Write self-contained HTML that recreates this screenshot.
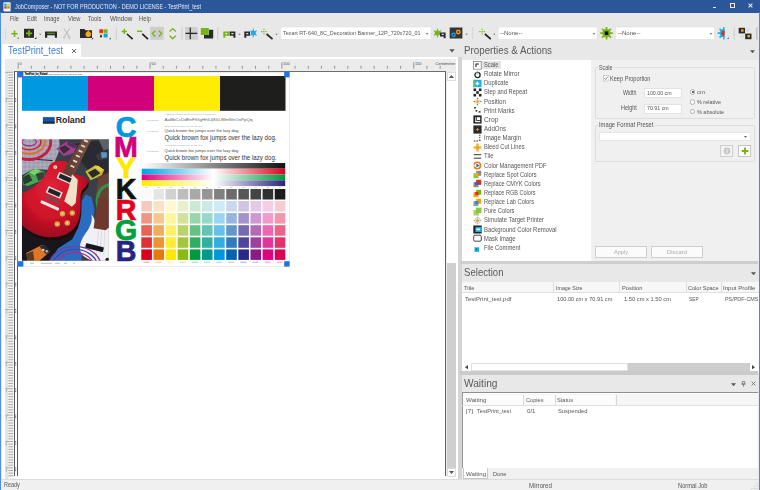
<!DOCTYPE html>
<html><head><meta charset="utf-8"><title>JobComposer</title>
<style>
html,body{margin:0;padding:0;}
body{width:760px;height:490px;overflow:hidden;position:relative;background:#e8e8e8;font-family:"Liberation Sans",sans-serif;}
div,span,svg{position:absolute;display:block;}
span{white-space:nowrap;transform-origin:0 50%;}
svg text{font-family:"Liberation Sans",sans-serif;}
</style></head><body>
<div style="left:0px;top:0px;width:760px;height:12.5px;background:#2b579a;"></div>
<svg style="left:2.5px;top:1.5px" width="8" height="10" viewBox="0 0 8 10"><rect x="0.4" y="0.3" width="7.2" height="9.2" rx="0.8" fill="#f2f2f2"/><rect x="1.2" y="1.6" width="2.5" height="2.3" fill="#2aa6e0"/><rect x="4.2" y="1.6" width="2.5" height="2.3" fill="#f0c020"/><rect x="1.2" y="4.3" width="2.5" height="2.3" fill="#e04040"/><rect x="4.2" y="4.3" width="2.5" height="2.3" fill="#7ab51d"/></svg>
<span style="left:14.6px;top:3.30px;font-size:6.5px;line-height:7.80px;color:#e4eaf6;transform:scaleX(0.8424);">JobComposer - NOT FOR PRODUCTION - DEMO LICENSE - TestPrint_test</span>
<div style="left:712.8px;top:6.8px;width:3.2px;height:1.2px;background:#e8ecf4;"></div>
<div style="left:730px;top:3.4px;width:4.6px;height:4.6px;background:transparent;border:1px solid #e8ecf4;box-sizing:border-box;border-top-width:1.6px;"></div>
<svg style="left:748px;top:3.2px" width="5" height="5" viewBox="0 0 5 5"><path d="M0.6 0.6L4.4 4.4M4.4 0.6L0.6 4.4" stroke="#e8ecf4" stroke-width="1.1"/></svg>
<div style="left:0px;top:12px;width:1.2px;height:478px;background:#4f8fe6;"></div>
<div style="left:758.6px;top:12px;width:1.4px;height:478px;background:#5585d0;"></div>
<span style="left:9.8px;top:15.16px;font-size:6.4px;line-height:7.68px;color:#505050;transform:scaleX(0.8631);">File</span>
<span style="left:26.6px;top:15.16px;font-size:6.4px;line-height:7.68px;color:#505050;transform:scaleX(0.8977);">Edit</span>
<span style="left:44.2px;top:15.16px;font-size:6.4px;line-height:7.68px;color:#505050;transform:scaleX(0.8771);">Image</span>
<span style="left:68px;top:15.16px;font-size:6.4px;line-height:7.68px;color:#505050;transform:scaleX(0.9014);">View</span>
<span style="left:88px;top:15.16px;font-size:6.4px;line-height:7.68px;color:#505050;transform:scaleX(0.8902);">Tools</span>
<span style="left:109.5px;top:15.16px;font-size:6.4px;line-height:7.68px;color:#505050;transform:scaleX(0.9797);">Window</span>
<span style="left:139.3px;top:15.16px;font-size:6.4px;line-height:7.68px;color:#505050;transform:scaleX(0.9117);">Help</span>
<svg style="left:0;top:24px" width="760" height="20" viewBox="0 24 760 20"><path d="M5.5 28V39" stroke="#bbb" stroke-width="0.8" stroke-dasharray="1 1"/><path d="M14.5 30.5V37M11.3 33.8H17.7" stroke="#7ab317" stroke-width="1.6"/><path d="M17 38.8L18.8 37V38.8Z" fill="#666"/><rect x="24" y="28.8" width="10" height="9" fill="#2a2a2a"/><path d="M29 30.3V36.3M26 33.3H32" stroke="#7ab317" stroke-width="1.8"/><path d="M34.5 39L36.5 37V39Z" fill="#333"/><path d="M39 33.8L41.4 33.8L40.2 35Z" fill="#666"/><path d="M45 31.5H57V37.8H54.8V35.2H47.2V37.8H45Z" fill="#2a2a2a"/><rect x="47.2" y="32.8" width="7.6" height="0.9" fill="#7ab317"/><path d="M64 28.5L69 36.5M69.5 28.5L64.5 36.5" stroke="#a9b7a0" stroke-width="0.9" fill="none"/><circle cx="64.3" cy="37.3" r="1" fill="none" stroke="#b5b5b5" stroke-width="0.6"/><circle cx="69.2" cy="37.3" r="1" fill="none" stroke="#b5b5b5" stroke-width="0.6"/><path d="M68.5 39.3L70 37.8V39.3Z" fill="#bbb"/><path d="M80 29H84.5L85.5 30.3H92V38H80Z" fill="#2a2a2a"/><circle cx="88.3" cy="34.3" r="2.8" fill="#f5a515"/><path d="M88.3 29.8L89.6 32.5H87Z" fill="#f5a515"/><path d="M91.3 39.3L93.2 37.4V39.3Z" fill="#333"/><rect x="99.3" y="29.3" width="3.8" height="3.6" fill="#e8281e"/><rect x="103.6" y="29.3" width="4" height="3.6" fill="#7ab317"/><rect x="103.6" y="33.5" width="4" height="4" fill="#1aa0e0"/><rect x="100" y="35.3" width="2" height="2" fill="#222"/><rect x="99.3" y="33.5" width="3.8" height="1.2" fill="#f5c518"/><path d="M109 39.3L110.8 37.5V39.3Z" fill="#333"/><path d="M116.3 27.5V39.5" stroke="#c4c4c4" stroke-width="0.8"/><path d="M124.3 28.8V34M121.7 31.4H126.9" stroke="#7ab317" stroke-width="1.5"/><path d="M127 34L132.6 39.2" stroke="#222" stroke-width="1.7"/><path d="M137 31.3H142.2" stroke="#7ab317" stroke-width="1.5"/><path d="M142.3 33.8L148 39.2" stroke="#222" stroke-width="1.7"/><rect x="150.3" y="26.8" width="13.4" height="13" fill="#cdcdcd"/><path d="M155.3 30.8L152.3 33.6L155.3 36.4M158.7 30.8L161.7 33.6L158.7 36.4" stroke="#7ab317" stroke-width="1.4" fill="none"/><path d="M169.6 31.6L172.7 28.6L175.8 31.6M169.6 35.8L172.7 38.8L175.8 35.8" stroke="#7ab317" stroke-width="1.4" fill="none"/><path d="M182 27.5V39.5" stroke="#c4c4c4" stroke-width="0.8"/><rect x="185" y="27" width="12.8" height="12.8" fill="#cfcfcf"/><path d="M190.3 27.5V39.3M185.5 33.3H197.3" stroke="#222" stroke-width="1.2"/><path d="M204 31V38.6H213.2V29.8H209V35H204Z" fill="#2a2a2a"/><rect x="200.8" y="28" width="8" height="7" fill="#7ab317"/><path d="M217.8 27.5V39.5" stroke="#c4c4c4" stroke-width="0.8"/><path fill-rule="evenodd" d="M223.3 31.5H229.10000000000002V35.8H225.3V37.7H223.3ZM225.3 33H227.3V34.3H225.3Z" fill="#7ab317"/><path fill-rule="evenodd" d="M229.6 31.5H235.4V37.7H233.4V35.8H229.6ZM231.4 33H233.4V34.3H231.4Z" fill="#2a2a2a"/><path d="M238.3 33.8L240.7 33.8L239.5 35Z" fill="#666"/><path fill-rule="evenodd" d="M244.3 31.5H250.10000000000002V35.8H246.3V37.7H244.3ZM246.3 33H248.3V34.3H246.3Z" fill="#2a2a2a"/><path d="M253.2 28L254.3 31.2L257 30L255.6 33L257 35.9L254.3 34.8L253.2 38L252.1 34.8L250 35.6L251.2 33L250 30.2L252.1 31.2Z" fill="#1cb0e8"/><path d="M264 28.8V34.4M261 31.6H267" stroke="#7ab317" stroke-width="1.1" stroke-dasharray="1.3 0.9"/><path d="M266.6 34L272.5 39.2" stroke="#222" stroke-width="1.7"/><path d="M275.4 33.8L277.8 33.8L276.6 35Z" fill="#666"/><rect x="280.5" y="27" width="150.5" height="12.4" fill="#fff" stroke="#dcdcdc" stroke-width="0.5"/><path d="M425.8 33.3H428.4L427.1 34.8Z" fill="#555"/><path d="M437.5 28L438.6 31.2L441.6 30L440 33L441.6 36L438.6 34.8L437.5 38L436.4 34.8L433.6 36L435 33L433.6 30L436.4 31.2Z" fill="#7ab317"/><path fill-rule="evenodd" d="M440 32.4H445.6V38.2H443.7V36.4H440ZM441.7 33.8H443.7V35H441.7Z" fill="#2a2a2a"/><rect x="449.7" y="27.5" width="12.7" height="11" fill="#33353a"/><circle cx="453.6" cy="34.8" r="1.6" fill="none" stroke="#18a8e8" stroke-width="1.3"/><circle cx="458.3" cy="32" r="1.7" fill="none" stroke="#f5a010" stroke-width="1.4"/><path d="M465.4 33.8L467.8 33.8L466.6 35Z" fill="#666"/><path d="M472.6 27.5V39.5" stroke="#bdbdbd" stroke-width="0.8" stroke-dasharray="1 1"/><path d="M482.3 28.8V34.4M479.3 31.6H485.3" stroke="#7ab317" stroke-width="1.1" stroke-dasharray="1.3 0.9"/><path d="M484.90000000000003 34L490.8 39.2" stroke="#222" stroke-width="1.7"/><path d="M493.2 33.8L495.6 33.8L494.4 35Z" fill="#666"/><rect x="498.2" y="27" width="99" height="12.4" fill="#fff" stroke="#dcdcdc" stroke-width="0.5"/><path d="M592.7 33.3H595.3L594 34.8Z" fill="#555"/><path d="M609.50 33.20L612.80 33.20M608.62 35.32L610.95 37.65M606.50 36.20L606.50 39.50M604.38 35.32L602.05 37.65M603.50 33.20L600.20 33.20M604.38 31.08L602.05 28.75M606.50 30.20L606.50 26.90M608.62 31.08L610.95 28.75" stroke="#7ab317" stroke-width="1.7"/><circle cx="606.5" cy="33.2" r="4.1" fill="#7ab317"/><rect x="604.7" y="31.4" width="3.6" height="3.6" fill="#111"/><rect x="615.5" y="27" width="99" height="12.4" fill="#fff" stroke="#dcdcdc" stroke-width="0.5"/><path d="M709.7 33.3H712.3L711 34.8Z" fill="#555"/><clipPath id="hg"><rect x="716" y="26" width="8.6" height="14"/></clipPath><g clip-path="url(#hg)"><path d="M727.00 33.20L730.30 33.20M726.12 35.32L728.45 37.65M724.00 36.20L724.00 39.50M721.88 35.32L719.55 37.65M721.00 33.20L717.70 33.20M721.88 31.08L719.55 28.75M724.00 30.20L724.00 26.90M726.12 31.08L728.45 28.75" stroke="#1cb0e8" stroke-width="1.7"/><circle cx="724" cy="33.2" r="4.1" fill="#1cb0e8"/><circle cx="724" cy="33.2" r="2.6" fill="#e8281e"/></g><path d="M727 39L728.8 37.2V39Z" fill="#555"/><path d="M734.3 27.5V39.5" stroke="#c4c4c4" stroke-width="0.8"/><rect x="738.7" y="27.8" width="6.3" height="5.6" fill="#2a2a2a"/><rect x="745.2" y="33.6" width="6.3" height="5.6" fill="#2a2a2a"/><rect x="741" y="29.3" width="2.6" height="2.4" fill="#f5a010"/><rect x="747.4" y="35" width="2.6" height="2.4" fill="#f5a010"/><rect x="745.4" y="28.4" width="3.5" height="3.5" fill="#dcdcdc"/><rect x="740.5" y="34.6" width="3.5" height="3.5" fill="#dcdcdc"/><path d="M756.8 28V39M756.8 28H758M756.8 39H758" stroke="#aaa" stroke-width="0.8" fill="none"/></svg>
<span style="left:283px;top:29.60px;font-size:6px;line-height:7.20px;color:#555;transform:scaleX(0.9027);">Texart RT-640_8C_Decoration Banner_12P_720x720_01</span>
<span style="left:500.2px;top:29.48px;font-size:6.2px;line-height:7.44px;color:#555;transform:scaleX(0.9749);">--None--</span>
<span style="left:617.5px;top:29.48px;font-size:6.2px;line-height:7.44px;color:#555;transform:scaleX(0.9749);">--None--</span>
<div style="left:2px;top:44px;width:78.5px;height:14px;background:#fff;"></div>
<span style="left:8px;top:43.70px;font-size:11px;line-height:13.20px;color:#3a82d8;transform:scaleX(0.8254);">TestPrint_test</span>
<svg style="left:70.5px;top:48px" width="6" height="6" viewBox="0 0 6 6"><path d="M1 1L5 5M5 1L1 5" stroke="#555" stroke-width="0.9"/></svg>
<svg style="left:449px;top:48.5px" width="6" height="4" viewBox="0 0 6 4"><path d="M0.3 0.3H5.7L3 3.6Z" fill="#555"/></svg>
<div style="left:1.5px;top:57px;width:456.5px;height:422.5px;background:#fff;"></div>
<div style="left:4.5px;top:59px;width:451.5px;height:418px;background:#ececec;"></div>
<div style="left:4.5px;top:72px;width:3.6px;height:407px;background:#e4e4e4;"></div>
<div style="left:8.1px;top:72px;width:6px;height:407px;background:#f5f5f5;"></div>
<div style="left:13.8px;top:71px;width:432.4px;height:408px;background:#fff;border:1px solid #5a5a5a;border-top-color:#6e6e6e;box-sizing:border-box;border-right:1.8px solid #606060;border-bottom:0;"></div>
<div style="left:14px;top:476px;width:432.5px;height:3.5px;background:#fff;"></div>
<div style="left:446.5px;top:72px;width:9px;height:404.5px;background:#cfcfcf;"></div>
<div style="left:446.5px;top:81px;width:9px;height:181.6px;background:#fff;"></div>
<div style="left:458.3px;top:57px;width:3.7px;height:422.5px;background:#d4d4d4;"></div>
<div style="left:446.5px;top:72px;width:9px;height:9px;background:#fff;border:0.5px solid #ddd;box-sizing:border-box;"></div>
<svg style="left:448.5px;top:75px" width="5" height="3" viewBox="0 0 5 3"><path d="M2.5 0L5 3H0Z" fill="#555"/></svg>
<div style="left:446.5px;top:467.5px;width:9px;height:9px;background:#fff;border:0.5px solid #ddd;box-sizing:border-box;"></div>
<svg style="left:448.5px;top:470.5px" width="5" height="3" viewBox="0 0 5 3"><path d="M2.5 3L5 0H0Z" fill="#555"/></svg>
<svg style="left:0;top:58px" width="460" height="14" viewBox="0 58 460 14"><path d="M18.20 62.4V68.7M31.38 65.8V68.7M44.57 65.8V68.7M57.75 65.8V68.7M70.94 65.8V68.7M84.12 65.8V68.7M97.31 65.8V68.7M110.50 65.8V68.7M123.68 65.8V68.7M136.87 65.8V68.7M150.05 62.4V68.7M163.23 65.8V68.7M176.42 65.8V68.7M189.60 65.8V68.7M202.79 65.8V68.7M215.97 65.8V68.7M229.16 65.8V68.7M242.34 65.8V68.7M255.53 65.8V68.7M268.72 65.8V68.7M281.90 62.4V68.7M295.08 65.8V68.7M308.27 65.8V68.7M321.45 65.8V68.7M334.64 65.8V68.7M347.82 65.8V68.7M361.01 65.8V68.7M374.19 65.8V68.7M387.38 65.8V68.7M400.56 65.8V68.7M413.75 62.4V68.7M426.94 65.8V68.7M440.12 65.8V68.7" stroke="#777" stroke-width="0.75"/><text x="19.40" y="65.3" font-size="3.9" fill="#444">0</text><text x="151.25" y="65.3" font-size="3.9" fill="#444">50</text><text x="283.10" y="65.3" font-size="3.9" fill="#444">100</text><text x="414.95" y="65.3" font-size="3.9" fill="#444">150</text><text x="435.3" y="65" font-size="3.9" fill="#444" textLength="20" lengthAdjust="spacingAndGlyphs">Centimeter</text></svg>
<svg style="left:0;top:71px" width="18" height="408" viewBox="0 71 18 408"><path d="M5.6 72.30H13M8.3 74.94H13M8.3 77.57H13M8.3 80.21H13M8.3 82.85H13M8.3 85.48H13M8.3 88.12H13M8.3 90.76H13M8.3 93.40H13M8.3 96.03H13M5.6 98.67H13M8.3 101.31H13M8.3 103.94H13M8.3 106.58H13M8.3 109.22H13M8.3 111.85H13M8.3 114.49H13M8.3 117.13H13M8.3 119.77H13M8.3 122.40H13M5.6 125.04H13M8.3 127.68H13M8.3 130.31H13M8.3 132.95H13M8.3 135.59H13M8.3 138.22H13M8.3 140.86H13M8.3 143.50H13M8.3 146.14H13M8.3 148.77H13M5.6 151.41H13M8.3 154.05H13M8.3 156.68H13M8.3 159.32H13M8.3 161.96H13M8.3 164.59H13M8.3 167.23H13M8.3 169.87H13M8.3 172.51H13M8.3 175.14H13M5.6 177.78H13M8.3 180.42H13M8.3 183.05H13M8.3 185.69H13M8.3 188.33H13M8.3 190.97H13M8.3 193.60H13M8.3 196.24H13M8.3 198.88H13M8.3 201.51H13M5.6 204.15H13M8.3 206.79H13M8.3 209.42H13M8.3 212.06H13M8.3 214.70H13M8.3 217.33H13M8.3 219.97H13M8.3 222.61H13M8.3 225.25H13M8.3 227.88H13M5.6 230.52H13M8.3 233.16H13M8.3 235.79H13M8.3 238.43H13M8.3 241.07H13M8.3 243.70H13M8.3 246.34H13M8.3 248.98H13M8.3 251.62H13M8.3 254.25H13M5.6 256.89H13M8.3 259.53H13M8.3 262.16H13M8.3 264.80H13M8.3 267.44H13M8.3 270.07H13M8.3 272.71H13M8.3 275.35H13M8.3 277.99H13M8.3 280.62H13M5.6 283.26H13M8.3 285.90H13M8.3 288.53H13M8.3 291.17H13M8.3 293.81H13M8.3 296.44H13M8.3 299.08H13M8.3 301.72H13M8.3 304.36H13M8.3 306.99H13M5.6 309.63H13M8.3 312.27H13M8.3 314.90H13M8.3 317.54H13M8.3 320.18H13M8.3 322.81H13M8.3 325.45H13M8.3 328.09H13M8.3 330.73H13M8.3 333.36H13M5.6 336.00H13M8.3 338.64H13M8.3 341.27H13M8.3 343.91H13M8.3 346.55H13M8.3 349.19H13M8.3 351.82H13M8.3 354.46H13M8.3 357.10H13M8.3 359.73H13M5.6 362.37H13M8.3 365.01H13M8.3 367.64H13M8.3 370.28H13M8.3 372.92H13M8.3 375.56H13M8.3 378.19H13M8.3 380.83H13M8.3 383.47H13M8.3 386.10H13M5.6 388.74H13M8.3 391.38H13M8.3 394.01H13M8.3 396.65H13M8.3 399.29H13M8.3 401.93H13M8.3 404.56H13M8.3 407.20H13M8.3 409.84H13M8.3 412.47H13M5.6 415.11H13M8.3 417.75H13M8.3 420.38H13M8.3 423.02H13M8.3 425.66H13M8.3 428.30H13M8.3 430.93H13M8.3 433.57H13M8.3 436.21H13M8.3 438.84H13M5.6 441.48H13M8.3 444.12H13M8.3 446.75H13M8.3 449.39H13M8.3 452.03H13M8.3 454.67H13M8.3 457.30H13M8.3 459.94H13M8.3 462.58H13M8.3 465.21H13M5.6 467.85H13M8.3 470.49H13M8.3 473.12H13M8.3 475.76H13" stroke="#8c8c8c" stroke-width="0.75"/><path d="M15.7 98.17V101.87" stroke="#666" stroke-width="1" stroke-dasharray="0.9 0.5"/><path d="M6.4 99.87V102.67" stroke="#999" stroke-width="0.9" stroke-dasharray="0.8 0.5"/><path d="M15.7 124.54V128.24" stroke="#666" stroke-width="1" stroke-dasharray="0.9 0.5"/><path d="M6.4 126.24V129.04" stroke="#999" stroke-width="0.9" stroke-dasharray="0.8 0.5"/><path d="M15.7 150.91V154.61" stroke="#666" stroke-width="1" stroke-dasharray="0.9 0.5"/><path d="M6.4 152.61V155.41" stroke="#999" stroke-width="0.9" stroke-dasharray="0.8 0.5"/><path d="M15.7 177.28V180.98" stroke="#666" stroke-width="1" stroke-dasharray="0.9 0.5"/><path d="M6.4 178.98V181.78" stroke="#999" stroke-width="0.9" stroke-dasharray="0.8 0.5"/><path d="M15.7 203.65V207.35" stroke="#666" stroke-width="1" stroke-dasharray="0.9 0.5"/><path d="M6.4 205.35V208.15" stroke="#999" stroke-width="0.9" stroke-dasharray="0.8 0.5"/><path d="M15.7 230.02V233.72" stroke="#666" stroke-width="1" stroke-dasharray="0.9 0.5"/><path d="M6.4 231.72V234.52" stroke="#999" stroke-width="0.9" stroke-dasharray="0.8 0.5"/><path d="M15.7 256.39V260.09" stroke="#666" stroke-width="1" stroke-dasharray="0.9 0.5"/><path d="M6.4 258.09V260.89" stroke="#999" stroke-width="0.9" stroke-dasharray="0.8 0.5"/><path d="M15.7 282.76V286.46" stroke="#666" stroke-width="1" stroke-dasharray="0.9 0.5"/><path d="M6.4 284.46V287.26" stroke="#999" stroke-width="0.9" stroke-dasharray="0.8 0.5"/><path d="M15.7 309.13V312.83" stroke="#666" stroke-width="1" stroke-dasharray="0.9 0.5"/><path d="M6.4 310.83V313.63" stroke="#999" stroke-width="0.9" stroke-dasharray="0.8 0.5"/><path d="M15.7 335.50V339.20" stroke="#666" stroke-width="1" stroke-dasharray="0.9 0.5"/><path d="M6.4 337.20V340.00" stroke="#999" stroke-width="0.9" stroke-dasharray="0.8 0.5"/><path d="M15.7 361.87V365.57" stroke="#666" stroke-width="1" stroke-dasharray="0.9 0.5"/><path d="M6.4 363.57V366.37" stroke="#999" stroke-width="0.9" stroke-dasharray="0.8 0.5"/><path d="M15.7 388.24V391.94" stroke="#666" stroke-width="1" stroke-dasharray="0.9 0.5"/><path d="M6.4 389.94V392.74" stroke="#999" stroke-width="0.9" stroke-dasharray="0.8 0.5"/><path d="M15.7 414.61V418.31" stroke="#666" stroke-width="1" stroke-dasharray="0.9 0.5"/><path d="M6.4 416.31V419.11" stroke="#999" stroke-width="0.9" stroke-dasharray="0.8 0.5"/><path d="M15.7 440.98V444.68" stroke="#666" stroke-width="1" stroke-dasharray="0.9 0.5"/><path d="M6.4 442.68V445.48" stroke="#999" stroke-width="0.9" stroke-dasharray="0.8 0.5"/><path d="M15.7 467.35V471.05" stroke="#666" stroke-width="1" stroke-dasharray="0.9 0.5"/><path d="M6.4 469.05V471.85" stroke="#999" stroke-width="0.9" stroke-dasharray="0.8 0.5"/></svg>
<svg style="left:15px;top:72px" width="431" height="404" viewBox="15 72 431 404"><defs><linearGradient id="gk" x1="0" x2="1"><stop offset="0" stop-color="#fff"/><stop offset="1" stop-color="#111"/></linearGradient><linearGradient id="gc" x1="0" x2="1"><stop offset="0" stop-color="#009fe3"/><stop offset="0.5" stop-color="#fff"/><stop offset="1" stop-color="#e3001b"/></linearGradient><linearGradient id="gm" x1="0" x2="1"><stop offset="0" stop-color="#e2007a"/><stop offset="0.5" stop-color="#fff"/><stop offset="1" stop-color="#009640"/></linearGradient><linearGradient id="gy" x1="0" x2="1"><stop offset="0" stop-color="#ffec00"/><stop offset="0.5" stop-color="#fff"/><stop offset="1" stop-color="#28237e"/></linearGradient></defs><path d="M17.5 72V476" stroke="#5a5a5a" stroke-width="1"/><rect x="18" y="72.3" width="271.5" height="194.2" fill="#fff" stroke="#d8d8d8" stroke-width="0.5"/><text x="24.8" y="75.1" font-size="3" font-weight="bold" fill="#000" stroke="#000" stroke-width="0.15" textLength="22.6" lengthAdjust="spacingAndGlyphs">TestPrint_for_Roland</text><text x="48" y="75" font-size="2.5" fill="#333" textLength="34" lengthAdjust="spacingAndGlyphs">This chart can be used for test</text><rect x="22" y="76" width="66" height="34.8" fill="#0098e0"/><rect x="88" y="76" width="66" height="34.8" fill="#d2007a"/><rect x="154" y="76" width="66" height="34.8" fill="#ffec00"/><rect x="220" y="76" width="65.5" height="34.8" fill="#1e1e1c"/><rect x="42.9" y="117.1" width="11.8" height="6.5" fill="#1b56b2"/><rect x="42.9" y="121.4" width="11.8" height="2.2" fill="#1d3338"/><path d="M42.9 119.2H54.7" stroke="#164a9c" stroke-width="0.5"/><text x="55.7" y="123.1" font-size="8.3" font-weight="bold" fill="#1c262c" textLength="29.8" lengthAdjust="spacingAndGlyphs">Roland</text><text x="126" y="136.6" font-size="28.6" font-weight="bold" fill="#0098e0" stroke="#0098e0" stroke-width="0.7" text-anchor="middle">C</text><text x="126" y="157.3" font-size="28.6" font-weight="bold" fill="#d2007a" stroke="#d2007a" stroke-width="0.7" text-anchor="middle">M</text><text x="126" y="178.0" font-size="28.6" font-weight="bold" fill="#ffe800" stroke="#ffe800" stroke-width="0.7" text-anchor="middle">Y</text><text x="126" y="198.8" font-size="28.6" font-weight="bold" fill="#111" stroke="#111" stroke-width="0.7" text-anchor="middle">K</text><text x="126" y="219.6" font-size="28.6" font-weight="bold" fill="#e2001a" stroke="#e2001a" stroke-width="0.7" text-anchor="middle">R</text><text x="126" y="240.4" font-size="28.6" font-weight="bold" fill="#00a03c" stroke="#00a03c" stroke-width="0.7" text-anchor="middle">G</text><text x="126" y="261.1" font-size="28.6" font-weight="bold" fill="#28237e" stroke="#28237e" stroke-width="0.7" text-anchor="middle">B</text><text x="164.5" y="115.3" font-size="2.2" fill="#999" textLength="52" lengthAdjust="spacingAndGlyphs">AaBbCc 7point Quick brown fox jumps over</text><text x="164.5" y="121" font-size="4.2" fill="#666" textLength="88" lengthAdjust="spacingAndGlyphs">AaBbCcDdEeFfGgHhIiJjKkLlMmNnOoPpQq</text><text x="147" y="121" font-size="2" fill="#999" textLength="12" lengthAdjust="spacingAndGlyphs">Font sample</text><text x="164.5" y="126.6" font-size="2.3" fill="#999" textLength="38" lengthAdjust="spacingAndGlyphs">Quick brown fox jumps over the lazy dog.</text><text x="147" y="132" font-size="2" fill="#999" textLength="12" lengthAdjust="spacingAndGlyphs">Font sample</text><text x="164.5" y="132.4" font-size="4.3" fill="#444" textLength="75" lengthAdjust="spacingAndGlyphs">Quick brown fox jumps over the lazy dog.</text><text x="164.5" y="140.2" font-size="6.6" fill="#333" textLength="112" lengthAdjust="spacingAndGlyphs">Quick brown fox jumps over the lazy dog.</text><text x="164.5" y="146.3" font-size="2.3" fill="#999" textLength="38" lengthAdjust="spacingAndGlyphs">Quick brown fox jumps over the lazy dog.</text><text x="147" y="151.5" font-size="2" fill="#999" textLength="12" lengthAdjust="spacingAndGlyphs">Font sample</text><text x="164.5" y="152" font-size="4.3" fill="#444" textLength="75" lengthAdjust="spacingAndGlyphs">Quick brown fox jumps over the lazy dog.</text><text x="164.5" y="160" font-size="6.6" fill="#333" textLength="112" lengthAdjust="spacingAndGlyphs">Quick brown fox jumps over the lazy dog.</text><rect x="141.7" y="163" width="143.5" height="5.7" fill="url(#gk)"/><rect x="141.7" y="168.7" width="143.5" height="5.8" fill="url(#gc)"/><rect x="141.7" y="174.5" width="143.5" height="5.8" fill="url(#gm)"/><rect x="141.7" y="180.3" width="143.5" height="5.8" fill="url(#gy)"/><rect x="141.30" y="189" width="10.6" height="10.5" fill="rgb(250,250,250)"/><rect x="145.30" y="187" width="2.2" height="0.7" fill="#bbb"/><rect x="153.43" y="189" width="10.6" height="10.5" fill="rgb(229,229,229)"/><rect x="157.43" y="187" width="2.2" height="0.7" fill="#bbb"/><rect x="165.56" y="189" width="10.6" height="10.5" fill="rgb(209,209,209)"/><rect x="169.56" y="187" width="2.2" height="0.7" fill="#bbb"/><rect x="177.69" y="189" width="10.6" height="10.5" fill="rgb(189,189,189)"/><rect x="181.69" y="187" width="2.2" height="0.7" fill="#bbb"/><rect x="189.82" y="189" width="10.6" height="10.5" fill="rgb(169,169,169)"/><rect x="193.82" y="187" width="2.2" height="0.7" fill="#bbb"/><rect x="201.95" y="189" width="10.6" height="10.5" fill="rgb(149,149,149)"/><rect x="205.95" y="187" width="2.2" height="0.7" fill="#bbb"/><rect x="214.08" y="189" width="10.6" height="10.5" fill="rgb(128,128,128)"/><rect x="218.08" y="187" width="2.2" height="0.7" fill="#bbb"/><rect x="226.21" y="189" width="10.6" height="10.5" fill="rgb(108,108,108)"/><rect x="230.21" y="187" width="2.2" height="0.7" fill="#bbb"/><rect x="238.34" y="189" width="10.6" height="10.5" fill="rgb(88,88,88)"/><rect x="242.34" y="187" width="2.2" height="0.7" fill="#bbb"/><rect x="250.47" y="189" width="10.6" height="10.5" fill="rgb(68,68,68)"/><rect x="254.47" y="187" width="2.2" height="0.7" fill="#bbb"/><rect x="262.60" y="189" width="10.6" height="10.5" fill="rgb(48,48,48)"/><rect x="266.60" y="187" width="2.2" height="0.7" fill="#bbb"/><rect x="274.73" y="189" width="10.6" height="10.5" fill="rgb(28,28,28)"/><rect x="278.73" y="187" width="2.2" height="0.7" fill="#bbb"/><rect x="141.30" y="201" width="10.6" height="10.5" fill="#f7c9bc"/><rect x="153.43" y="201" width="10.6" height="10.5" fill="#fae3c4"/><rect x="165.56" y="201" width="10.6" height="10.5" fill="#fffacc"/><rect x="177.69" y="201" width="10.6" height="10.5" fill="#e8f0cd"/><rect x="189.82" y="201" width="10.6" height="10.5" fill="#ccead3"/><rect x="201.95" y="201" width="10.6" height="10.5" fill="#cceae5"/><rect x="214.08" y="201" width="10.6" height="10.5" fill="#cceaf8"/><rect x="226.21" y="201" width="10.6" height="10.5" fill="#cad8ee"/><rect x="238.34" y="201" width="10.6" height="10.5" fill="#d0c5e4"/><rect x="250.47" y="201" width="10.6" height="10.5" fill="#e5c9e6"/><rect x="262.60" y="201" width="10.6" height="10.5" fill="#f9cce5"/><rect x="274.73" y="201" width="10.6" height="10.5" fill="#f8cbd1"/><rect x="141.30" y="213.1" width="10.6" height="10.5" fill="#ef9583"/><rect x="153.43" y="213.1" width="10.6" height="10.5" fill="#f6c88e"/><rect x="165.56" y="213.1" width="10.6" height="10.5" fill="#fff699"/><rect x="177.69" y="213.1" width="10.6" height="10.5" fill="#d1e29c"/><rect x="189.82" y="213.1" width="10.6" height="10.5" fill="#99d5aa"/><rect x="201.95" y="213.1" width="10.6" height="10.5" fill="#99d6cc"/><rect x="214.08" y="213.1" width="10.6" height="10.5" fill="#99d5f1"/><rect x="226.21" y="213.1" width="10.6" height="10.5" fill="#96b5dd"/><rect x="238.34" y="213.1" width="10.6" height="10.5" fill="#a393cb"/><rect x="250.47" y="213.1" width="10.6" height="10.5" fill="#cd98cd"/><rect x="262.60" y="213.1" width="10.6" height="10.5" fill="#f399cc"/><rect x="274.73" y="213.1" width="10.6" height="10.5" fill="#f197a9"/><rect x="141.30" y="225.2" width="10.6" height="10.5" fill="#e86256"/><rect x="153.43" y="225.2" width="10.6" height="10.5" fill="#f1ad5d"/><rect x="165.56" y="225.2" width="10.6" height="10.5" fill="#fff166"/><rect x="177.69" y="225.2" width="10.6" height="10.5" fill="#bad46c"/><rect x="189.82" y="225.2" width="10.6" height="10.5" fill="#66c184"/><rect x="201.95" y="225.2" width="10.6" height="10.5" fill="#66c2b5"/><rect x="214.08" y="225.2" width="10.6" height="10.5" fill="#66c0ea"/><rect x="226.21" y="225.2" width="10.6" height="10.5" fill="#6396ce"/><rect x="238.34" y="225.2" width="10.6" height="10.5" fill="#7868b3"/><rect x="250.47" y="225.2" width="10.6" height="10.5" fill="#b56ab4"/><rect x="262.60" y="225.2" width="10.6" height="10.5" fill="#ec66b2"/><rect x="274.73" y="225.2" width="10.6" height="10.5" fill="#ea6486"/><rect x="141.30" y="237.3" width="10.6" height="10.5" fill="#e03033"/><rect x="153.43" y="237.3" width="10.6" height="10.5" fill="#ed9332"/><rect x="165.56" y="237.3" width="10.6" height="10.5" fill="#ffed33"/><rect x="177.69" y="237.3" width="10.6" height="10.5" fill="#a3c63e"/><rect x="189.82" y="237.3" width="10.6" height="10.5" fill="#33ad60"/><rect x="201.95" y="237.3" width="10.6" height="10.5" fill="#33ae9f"/><rect x="214.08" y="237.3" width="10.6" height="10.5" fill="#33abe3"/><rect x="226.21" y="237.3" width="10.6" height="10.5" fill="#317bbf"/><rect x="238.34" y="237.3" width="10.6" height="10.5" fill="#50459c"/><rect x="250.47" y="237.3" width="10.6" height="10.5" fill="#9f409d"/><rect x="262.60" y="237.3" width="10.6" height="10.5" fill="#e63399"/><rect x="274.73" y="237.3" width="10.6" height="10.5" fill="#e33268"/><rect x="141.30" y="249.4" width="10.6" height="10.5" fill="#d8001a"/><rect x="153.43" y="249.4" width="10.6" height="10.5" fill="#e87a0c"/><rect x="165.56" y="249.4" width="10.6" height="10.5" fill="#ffe800"/><rect x="177.69" y="249.4" width="10.6" height="10.5" fill="#8cb811"/><rect x="189.82" y="249.4" width="10.6" height="10.5" fill="#009a3e"/><rect x="201.95" y="249.4" width="10.6" height="10.5" fill="#009a8a"/><rect x="214.08" y="249.4" width="10.6" height="10.5" fill="#0096dc"/><rect x="226.21" y="249.4" width="10.6" height="10.5" fill="#0064b0"/><rect x="238.34" y="249.4" width="10.6" height="10.5" fill="#2a2a86"/><rect x="250.47" y="249.4" width="10.6" height="10.5" fill="#8a1a86"/><rect x="262.60" y="249.4" width="10.6" height="10.5" fill="#e0007f"/><rect x="274.73" y="249.4" width="10.6" height="10.5" fill="#dc0050"/><rect x="143.30" y="261.8" width="6" height="0.7" fill="#e97281"/><rect x="155.43" y="261.8" width="6" height="0.7" fill="#f2b579"/><rect x="167.56" y="261.8" width="6" height="0.7" fill="#fff272"/><rect x="179.69" y="261.8" width="6" height="0.7" fill="#bfd77c"/><rect x="191.82" y="261.8" width="6" height="0.7" fill="#72c794"/><rect x="203.95" y="261.8" width="6" height="0.7" fill="#72c7be"/><rect x="216.08" y="261.8" width="6" height="0.7" fill="#72c5eb"/><rect x="228.21" y="261.8" width="6" height="0.7" fill="#72a9d3"/><rect x="240.34" y="261.8" width="6" height="0.7" fill="#8989bc"/><rect x="252.47" y="261.8" width="6" height="0.7" fill="#be81bc"/><rect x="264.60" y="261.8" width="6" height="0.7" fill="#ed72b8"/><rect x="276.73" y="261.8" width="6" height="0.7" fill="#eb729e"/><path d="M30 263.3H34M41 263.3H52M55 263.3H60M64 263.3H67M73 263.3H75" stroke="#aaa" stroke-width="0.8"/><svg x="20" y="136" width="92" height="128.1" viewBox="0 0 704 980"><defs><clipPath id="pc"><rect x="15" y="24" width="665" height="930"/></clipPath><radialGradient id="rb" cx="0.45" cy="0.35" r="0.75"><stop offset="0" stop-color="#e02436"/><stop offset="0.55" stop-color="#cc1228"/><stop offset="1" stop-color="#8a0a1c"/></radialGradient><linearGradient id="nk" x1="0" x2="1"><stop offset="0" stop-color="#5a3a2e"/><stop offset="1" stop-color="#7a5444"/></linearGradient><filter id="bl" x="-5%" y="-5%" width="110%" height="110%"><feGaussianBlur stdDeviation="2.2"/></filter><pattern id="tx" width="10" height="10" patternUnits="userSpaceOnUse"><rect width="10" height="10" fill="#a6a6b8"/><rect x="0" y="0" width="5" height="5" fill="#9696aa"/><rect x="5" y="5" width="5" height="5" fill="#b2b2c2"/></pattern></defs><g clip-path="url(#pc)"><g filter="url(#bl)"><rect x="0" y="0" width="704" height="980" fill="#3a3c46"/><path d="M15 22H300L306 100L264 200L215 258L100 252L15 300Z" fill="url(#tx)"/><path d="M420 60L680 24V300L560 300L470 200Z" fill="#2a2b32"/><path d="M600 24H680V100L640 110Z" fill="#5c5e68"/><path d="M125 180L250 188" stroke="#222" stroke-width="8"/><ellipse cx="70" cy="45" rx="165" ry="135" fill="none" stroke="#c81c44" stroke-width="22"/><ellipse cx="70" cy="45" rx="120" ry="92" fill="none" stroke="#e8702c" stroke-width="16"/><ellipse cx="70" cy="45" rx="90" ry="60" fill="none" stroke="#cc2030" stroke-width="12"/><ellipse cx="70" cy="45" rx="55" ry="30" fill="none" stroke="#a82878" stroke-width="9"/><path d="M278 95L355 42L435 72L410 130L335 155Z" fill="#a0408e"/><path d="M300 92L345 70L385 100L335 135Z" fill="#3a2a3a"/><path d="M360 45L430 68L420 95L365 70Z" fill="#5a2a5a"/><path d="M575 150L640 115L675 135L670 175L600 185Z" fill="#3a3a44"/><path d="M620 125L665 125L665 165L625 170Z" fill="#5c92c8"/><path d="M500 272L580 222L645 258L625 302L540 338Z" fill="#c8b838"/><path d="M520 280L575 250L615 285L555 322Z" fill="#2c2c2c"/><path d="M560 235L600 228L640 258L618 270Z" fill="#e4d444"/><path d="M18 315L100 250L185 272L192 330L60 382L22 372Z" fill="#4aa850"/><path d="M70 275L120 250L160 262L110 300Z" fill="#7ad070"/><path d="M18 318L70 290L95 340L30 372Z" fill="#2c3a30"/><path d="M120 290L180 275L190 325L140 345Z" fill="#38403a"/><path d="M600 310L680 280V500L575 495Z" fill="#6a4034"/><path d="M690 372C620 380 585 440 592 520C596 560 610 580 620 600" stroke="#2a9448" stroke-width="24" fill="none"/><path d="M15 640L470 700L430 954H15Z" fill="#15151a"/><path d="M505 448L548 468L570 560L560 650L520 740L480 830L470 954H230L290 860L400 790L445 700L462 600L470 500Z" fill="#2c6cc2"/><path d="M215 250C225 195 300 175 365 200L400 290C450 300 520 310 520 345C520 390 470 400 465 450C460 520 470 560 455 620C440 700 380 770 250 775C150 775 60 730 15 680L15 440C80 410 140 370 180 320C200 290 210 270 215 250Z" transform="translate(6,22)" fill="#1a0a0c"/><path d="M215 250C225 195 300 175 365 200L400 290C450 300 520 310 520 345C520 390 470 400 465 450C460 520 470 560 455 620C440 700 380 770 250 775C150 775 60 730 15 680L15 440C80 410 140 370 180 320C200 290 210 270 215 250Z" fill="url(#rb)"/><path d="M478 22H548L405 318L325 280Z" fill="url(#nk)"/><rect x="488" y="31" width="32" height="14" fill="#e8dcc8" transform="rotate(25 504 39)"/><rect x="467" y="70" width="32" height="14" fill="#e8dcc8" transform="rotate(25 483 78)"/><rect x="447" y="109" width="32" height="14" fill="#e8dcc8" transform="rotate(25 463 117)"/><rect x="426" y="147" width="32" height="14" fill="#e8dcc8" transform="rotate(25 442 155)"/><rect x="405" y="186" width="32" height="14" fill="#e8dcc8" transform="rotate(25 421 194)"/><rect x="385" y="225" width="32" height="14" fill="#e8dcc8" transform="rotate(25 401 233)"/><path d="M398 292L442 335L434 440L426 512L396 542L338 500L372 400Z" fill="#ece2c8"/><circle cx="270" cy="238" r="15" fill="#e8dcc0"/><circle cx="270" cy="238" r="6" fill="#b8a070"/><g transform="rotate(24 345 322)"><rect x="285" y="295" width="120" height="54" rx="5" fill="#e4e0dc"/><rect x="297" y="305" width="96" height="34" fill="#24222a"/></g><g transform="rotate(24 262 432)"><rect x="202" y="405" width="120" height="54" rx="5" fill="#e4e0dc"/><rect x="214" y="415" width="96" height="34" fill="#24222a"/></g><g transform="rotate(24 250 488)"><rect x="195" y="478" width="115" height="18" rx="6" fill="#5a5458"/></g><g transform="rotate(24 228 532)"><rect x="152" y="520" width="152" height="24" rx="8" fill="#e8e6e6"/></g><circle cx="325" cy="594" r="21" fill="#d4a448"/><circle cx="325" cy="594" r="9" fill="#e8c878"/><circle cx="400" cy="589" r="21" fill="#d4a448"/><circle cx="400" cy="589" r="9" fill="#e8c878"/><circle cx="285" cy="674" r="21" fill="#d4a448"/><circle cx="285" cy="674" r="9" fill="#e8c878"/><circle cx="362" cy="666" r="21" fill="#d4a448"/><circle cx="362" cy="666" r="9" fill="#e8c878"/><path d="M545 600C560 640 535 700 512 730C482 770 452 820 460 870C468 920 520 945 560 954H680V700L655 715L570 700C580 660 570 620 545 600Z" fill="#f0f0f6"/><path d="M598 474H680V700L655 722L563 706Z" fill="#6e382e"/><path d="M600 720L585 900M625 722L612 905M650 722L640 910" stroke="#b8b8c4" stroke-width="3" fill="none"/><g transform="rotate(14 570 855)"><rect x="500" y="835" width="140" height="38" rx="6" fill="#17171c"/></g><circle cx="668" cy="945" r="14" fill="#222"/><path d="M48 895L170 832L232 882L150 954H58Z" fill="#e07428"/><path d="M150 845L190 828L232 880L200 905Z" fill="#2a2a2e"/><circle cx="178" cy="872" r="10" fill="#ccc"/><circle cx="204" cy="882" r="9" fill="#bbb"/><path d="M48 900L100 880L110 954H58Z" fill="#5a3a20"/><ellipse cx="420" cy="1010" rx="205" ry="165" fill="none" stroke="#7a3a98" stroke-width="10"/><ellipse cx="420" cy="1010" rx="176" ry="142" fill="none" stroke="#3848b0" stroke-width="10"/><ellipse cx="420" cy="1010" rx="148" ry="119" fill="none" stroke="#b02c80" stroke-width="10"/></g></g></svg><rect x="18" y="72" width="5.4" height="5.4" fill="#1f74e0"/><rect x="284.2" y="72" width="5.4" height="5.4" fill="#1f74e0"/><rect x="18" y="261.2" width="5.4" height="5.4" fill="#1f74e0"/><rect x="284.2" y="261.2" width="5.4" height="5.4" fill="#1f74e0"/><rect x="22" y="76.3" width="1.4" height="1.4" fill="#ff20c0"/></svg>
<span style="left:464px;top:44.12px;font-size:11.3px;line-height:13.56px;color:#5a5a5a;transform:scaleX(0.8649);">Properties &amp; Actions</span>
<svg style="left:750.3px;top:49.6px" width="5" height="3.5" viewBox="0 0 5 3.5"><path d="M0 0.2H5L2.5 3.2Z" fill="#555"/></svg>
<div style="left:462px;top:60px;width:128.5px;height:201px;background:#fff;"></div>
<div style="left:590.5px;top:60px;width:168.2px;height:201px;background:#f0f0f0;"></div>
<div style="left:460px;top:261px;width:298px;height:3.4px;background:#cecece;"></div>
<div style="left:472.5px;top:60.6px;width:28px;height:8.6px;background:#e4e4e4;"></div>
<span style="left:484px;top:60.90px;font-size:6.5px;line-height:7.80px;color:#555;transform:scaleX(0.8918);">Scale</span>
<span style="left:484px;top:70.05px;font-size:6.5px;line-height:7.80px;color:#555;transform:scaleX(0.9361);">Rotate Mirror</span>
<span style="left:484px;top:79.20px;font-size:6.5px;line-height:7.80px;color:#555;transform:scaleX(0.9042);">Duplicate</span>
<span style="left:484px;top:88.35px;font-size:6.5px;line-height:7.80px;color:#555;transform:scaleX(0.8814);">Step and Repeat</span>
<span style="left:484px;top:97.50px;font-size:6.5px;line-height:7.80px;color:#555;transform:scaleX(0.9514);">Position</span>
<span style="left:484px;top:106.65px;font-size:6.5px;line-height:7.80px;color:#555;transform:scaleX(0.9281);">Print Marks</span>
<span style="left:484px;top:115.80px;font-size:6.5px;line-height:7.80px;color:#555;transform:scaleX(1.0293);">Crop</span>
<span style="left:484px;top:124.95px;font-size:6.5px;line-height:7.80px;color:#555;transform:scaleX(0.9368);">AddOns</span>
<span style="left:484px;top:134.10px;font-size:6.5px;line-height:7.80px;color:#555;transform:scaleX(0.9311);">Image Margin</span>
<span style="left:484px;top:143.25px;font-size:6.5px;line-height:7.80px;color:#555;transform:scaleX(0.8826);">Bleed Cut Lines</span>
<span style="left:484px;top:152.40px;font-size:6.5px;line-height:7.80px;color:#555;transform:scaleX(0.9284);">Tile</span>
<span style="left:484px;top:161.55px;font-size:6.5px;line-height:7.80px;color:#555;transform:scaleX(0.8918);">Color Management PDF</span>
<span style="left:484px;top:170.70px;font-size:6.5px;line-height:7.80px;color:#555;transform:scaleX(0.8807);">Replace Spot Colors</span>
<span style="left:484px;top:179.85px;font-size:6.5px;line-height:7.80px;color:#555;transform:scaleX(0.8690);">Replace CMYK Colors</span>
<span style="left:484px;top:189.00px;font-size:6.5px;line-height:7.80px;color:#555;transform:scaleX(0.8537);">Replace RGB Colors</span>
<span style="left:484px;top:198.15px;font-size:6.5px;line-height:7.80px;color:#555;transform:scaleX(0.8759);">Replace Lab Colors</span>
<span style="left:484px;top:207.30px;font-size:6.5px;line-height:7.80px;color:#555;transform:scaleX(0.8888);">Pure Colors</span>
<span style="left:484px;top:216.45px;font-size:6.5px;line-height:7.80px;color:#555;transform:scaleX(0.9092);">Simulate Target Printer</span>
<span style="left:484px;top:225.60px;font-size:6.5px;line-height:7.80px;color:#555;transform:scaleX(0.9122);">Background Color Removal</span>
<span style="left:484px;top:234.75px;font-size:6.5px;line-height:7.80px;color:#555;transform:scaleX(0.8899);">Mask Image</span>
<span style="left:484px;top:243.90px;font-size:6.5px;line-height:7.80px;color:#555;transform:scaleX(0.9023);">File Comment</span>
<svg style="left:472.8px;top:60.50px" width="9" height="9" viewBox="0 0 9 9"><rect x="0.6" y="0.6" width="7.6" height="7.6" fill="#fff" stroke="#777" stroke-width="0.7"/><path d="M3 6V3H6" stroke="#222" stroke-width="1.1" fill="none"/></svg>
<svg style="left:472.8px;top:69.65px" width="9" height="9" viewBox="0 0 9 9"><circle cx="4.5" cy="5" r="2.6" fill="none" stroke="#222" stroke-width="1.3"/><rect x="3.9" y="0.8" width="1.2" height="3.4" fill="#222" stroke="#fff" stroke-width="0.5"/></svg>
<svg style="left:472.8px;top:78.80px" width="9" height="9" viewBox="0 0 9 9"><rect x="0.3" y="0.8" width="8.2" height="7.4" fill="#1cb0e8"/><path d="M4.4 2.6V6.4M2.5 4.5H6.3" stroke="#fff" stroke-width="1.4"/><rect x="0.3" y="0.8" width="1.3" height="7.4" fill="#8cc63f"/></svg>
<svg style="left:472.8px;top:87.95px" width="9" height="9" viewBox="0 0 9 9"><rect x="0.5" y="0.5" width="2.6" height="2.6" fill="#222"/><rect x="5.9" y="0.5" width="2.6" height="2.6" fill="#222"/><rect x="3.2" y="3.2" width="2.6" height="2.6" fill="#222"/><rect x="0.5" y="5.9" width="2.6" height="2.6" fill="#222"/><rect x="5.9" y="5.9" width="2.6" height="2.6" fill="#222"/></svg>
<svg style="left:472.8px;top:97.10px" width="9" height="9" viewBox="0 0 9 9"><circle cx="4.5" cy="4.5" r="1.5" fill="#e8b020"/><path d="M4.5 0.5V2.3M4.5 6.7V8.5M0.5 4.5H2.3M6.7 4.5H8.5" stroke="#7ab317" stroke-width="1.1"/><circle cx="4.5" cy="4.5" r="2.6" fill="none" stroke="#444" stroke-width="0.5" stroke-dasharray="0.8 0.8"/></svg>
<svg style="left:472.8px;top:106.25px" width="9" height="9" viewBox="0 0 9 9"><rect x="1.2" y="1" width="1.6" height="1.6" fill="#222"/><rect x="2.6" y="4" width="1.6" height="1.6" fill="#222"/><rect x="5.6" y="5.2" width="2" height="1.4" fill="#222"/></svg>
<svg style="left:472.8px;top:115.40px" width="9" height="9" viewBox="0 0 9 9"><rect x="0.4" y="0.4" width="8.2" height="8.2" fill="#222"/><rect x="2.2" y="2.2" width="5" height="5" fill="#fff"/><path d="M3.4 1V5.6H8" stroke="#222" stroke-width="0.9" fill="none"/></svg>
<svg style="left:472.8px;top:124.55px" width="9" height="9" viewBox="0 0 9 9"><rect x="0.4" y="0.4" width="8.2" height="8.2" fill="#2a2a2a"/><path d="M4.5 2.4L5.1 3.9L6.6 4.5L5.1 5.1L4.5 6.6L3.9 5.1L2.4 4.5L3.9 3.9Z" fill="#f5a010"/></svg>
<svg style="left:472.8px;top:133.70px" width="9" height="9" viewBox="0 0 9 9"><path d="M0.8 7H5.5" stroke="#333" stroke-width="1" stroke-dasharray="1.6 1"/><path d="M6.8 0.8V4" stroke="#333" stroke-width="1" stroke-dasharray="1.4 0.8"/><path d="M6.8 5L7.9 6.8H5.7Z" fill="#222"/></svg>
<svg style="left:472.8px;top:142.85px" width="9" height="9" viewBox="0 0 9 9"><path d="M4.5 0.6V8.4M0.6 4.5H8.4" stroke="#f0a818" stroke-width="2.2"/><circle cx="4.5" cy="4.5" r="1.8" fill="#f0a818"/></svg>
<svg style="left:472.8px;top:152.00px" width="9" height="9" viewBox="0 0 9 9"><path d="M0.8 2.7H8.2M0.8 6.2H8.2" stroke="#333" stroke-width="1"/></svg>
<svg style="left:472.8px;top:161.15px" width="9" height="9" viewBox="0 0 9 9"><circle cx="4.3" cy="4.5" r="3.2" fill="#fff" stroke="#f07a10" stroke-width="1.5"/><path d="M3.4 2.5L6.6 4.5L3.4 6.5Z" fill="#1a6fd0"/><path d="M0.8 3.5V5.8" stroke="#fff" stroke-width="1.2"/></svg>
<svg style="left:472.8px;top:170.30px" width="9" height="9" viewBox="0 0 9 9"><rect x="0.5" y="3.2" width="5" height="5" fill="#8cc63f"/><rect x="3.2" y="0.8" width="5" height="5" fill="#8a8a8a"/><rect x="2.2" y="3" width="3.2" height="3" fill="#f0a818"/></svg>
<svg style="left:472.8px;top:179.45px" width="9" height="9" viewBox="0 0 9 9"><rect x="0.5" y="3.2" width="5" height="5" fill="#888"/><rect x="3.2" y="0.8" width="5" height="5" fill="#e8281e"/><rect x="2.2" y="3" width="3.2" height="3" fill="#1a6fd0"/></svg>
<svg style="left:472.8px;top:188.60px" width="9" height="9" viewBox="0 0 9 9"><rect x="0.5" y="3.2" width="5" height="5" fill="#f5a010"/><rect x="3.2" y="0.8" width="5" height="5" fill="#7ab317"/><rect x="2.2" y="3" width="3.2" height="3" fill="#e8281e"/></svg>
<svg style="left:472.8px;top:197.75px" width="9" height="9" viewBox="0 0 9 9"><rect x="0.5" y="3.2" width="5" height="5" fill="#8a9ab0"/><rect x="3.2" y="0.8" width="5" height="5" fill="#f5a010"/><rect x="2.2" y="3" width="3.2" height="3" fill="#1a90e0"/></svg>
<svg style="left:472.8px;top:206.90px" width="9" height="9" viewBox="0 0 9 9"><rect x="0.5" y="3" width="5.5" height="5.5" fill="#a9cf6a"/><rect x="3" y="0.6" width="5.5" height="5.5" fill="#8cc63f"/></svg>
<svg style="left:472.8px;top:216.05px" width="9" height="9" viewBox="0 0 9 9"><circle cx="4.5" cy="4.5" r="2.9" fill="none" stroke="#9ab" stroke-width="0.7"/><circle cx="4.5" cy="4.5" r="1.5" fill="#f5a010"/><path d="M4.5 0.3V8.7M0.3 4.5H8.7" stroke="#9ab" stroke-width="0.5"/></svg>
<svg style="left:472.8px;top:225.20px" width="9" height="9" viewBox="0 0 9 9"><rect x="0.3" y="0.5" width="8.3" height="8" fill="#222"/><rect x="2.4" y="2" width="6.2" height="5" fill="#1cb0e8"/><rect x="3.4" y="3.6" width="3.6" height="1.6" fill="#fff"/></svg>
<svg style="left:472.8px;top:234.35px" width="9" height="9" viewBox="0 0 9 9"><rect x="0.7" y="1.2" width="7.6" height="6" rx="1.3" fill="#fff" stroke="#333" stroke-width="0.9"/></svg>
<svg style="left:472.8px;top:243.50px" width="9" height="9" viewBox="0 0 9 9"><rect x="1.5" y="3.3" width="4.6" height="4.6" fill="#1cb0e8"/><rect x="2.8" y="4.6" width="1.3" height="1.3" fill="#0a4a80"/></svg>
<div style="left:595px;top:67.3px;width:160px;height:52px;background:transparent;border:0.7px solid #dcdcdc;box-sizing:border-box;border-radius:1.5px;"></div>
<div style="left:598px;top:64.3px;width:15.5px;height:6px;background:#f0f0f0;"></div>
<span style="left:599px;top:63.52px;font-size:6.3px;line-height:7.56px;color:#555;transform:scaleX(0.8567);">Scale</span>
<svg style="left:602.6px;top:75.4px" width="6.4" height="6.4" viewBox="0 0 6.4 6.4"><rect x="0.4" y="0.4" width="5.6" height="5.6" fill="#fff" stroke="#a8a8a8" stroke-width="0.5"/><path d="M1.5 3.2L2.7 4.5L4.9 1.7" stroke="#555" stroke-width="0.7" fill="none"/></svg>
<span style="left:610.2px;top:74.72px;font-size:6.3px;line-height:7.56px;color:#555;transform:scaleX(0.8896);">Keep Proportion</span>
<span style="left:623.3px;top:88.92px;font-size:6.3px;line-height:7.56px;color:#555;transform:scaleX(0.8321);">Width</span>
<span style="left:621px;top:104.22px;font-size:6.3px;line-height:7.56px;color:#555;transform:scaleX(0.8622);">Height</span>
<div style="left:644.4px;top:88.2px;width:37.3px;height:10.1px;background:#fff;border:0.6px solid #e2e2e2;box-sizing:border-box;"></div>
<div style="left:644.4px;top:103.5px;width:37.3px;height:10.1px;background:#fff;border:0.6px solid #e2e2e2;box-sizing:border-box;"></div>
<span style="left:647.3px;top:89.76px;font-size:5.9px;line-height:7.08px;color:#555;transform:scaleX(0.8966);">100.00 cm</span>
<span style="left:647.3px;top:105.06px;font-size:5.9px;line-height:7.08px;color:#555;transform:scaleX(0.8942);">70.91 cm</span>
<div style="left:690px;top:89.4px;width:5.2px;height:5.2px;background:#fff;border:0.5px solid #b0b0b0;box-sizing:border-box;border-radius:50%;"></div>
<div style="left:691.5px;top:90.9px;width:2.2px;height:2.2px;background:#333;border-radius:50%;"></div>
<span style="left:696.7px;top:88.28px;font-size:6.2px;line-height:7.44px;color:#555;transform:scaleX(0.9559);">cm</span>
<div style="left:690px;top:99.4px;width:5.2px;height:5.2px;background:#fff;border:0.5px solid #b0b0b0;box-sizing:border-box;border-radius:50%;"></div>
<span style="left:696.7px;top:98.28px;font-size:6.2px;line-height:7.44px;color:#555;transform:scaleX(0.8817);">% relative</span>
<div style="left:690px;top:108.7px;width:5.2px;height:5.2px;background:#fff;border:0.5px solid #b0b0b0;box-sizing:border-box;border-radius:50%;"></div>
<span style="left:696.7px;top:107.58px;font-size:6.2px;line-height:7.44px;color:#555;transform:scaleX(0.8802);">% absolute</span>
<div style="left:595px;top:124.8px;width:160px;height:37px;background:transparent;border:0.7px solid #dcdcdc;box-sizing:border-box;border-radius:1.5px;"></div>
<div style="left:598px;top:121.8px;width:56.4px;height:6px;background:#f0f0f0;"></div>
<span style="left:599px;top:121.02px;font-size:6.3px;line-height:7.56px;color:#555;transform:scaleX(0.9194);">Image Format Preset</span>
<div style="left:599px;top:132px;width:151.7px;height:9px;background:#fff;border:0.5px solid #e6e6e6;box-sizing:border-box;"></div>
<svg style="left:744.2px;top:135.8px" width="3" height="2" viewBox="0 0 3 2"><path d="M0 0H3L1.5 1.8Z" fill="#555"/></svg>
<div style="left:720.3px;top:144.8px;width:12.4px;height:12.6px;background:#f4f4f4;border:0.7px solid #cfcfcf;box-sizing:border-box;"></div>
<svg style="left:722.5px;top:147.2px" width="8" height="8" viewBox="0 0 8 8"><circle cx="4" cy="4" r="3.4" fill="#c9c9c9"/><rect x="3.5" y="3.4" width="1" height="2.6" fill="#f4f4f4"/><rect x="3.5" y="1.9" width="1" height="1" fill="#f4f4f4"/></svg>
<div style="left:738.3px;top:144.8px;width:12.4px;height:12.6px;background:#fff;border:0.7px solid #c4c4c4;box-sizing:border-box;"></div>
<svg style="left:740.5px;top:147.1px" width="8" height="8" viewBox="0 0 8 8"><path d="M4 0.6V7.4M0.6 4H7.4" stroke="#7ab317" stroke-width="1.9"/></svg>
<div style="left:595.4px;top:246px;width:51.5px;height:12.3px;background:#fbfbfb;border:0.7px solid #cdcdcd;box-sizing:border-box;"></div>
<div style="left:651.3px;top:246px;width:51.5px;height:12.3px;background:#fbfbfb;border:0.7px solid #cdcdcd;box-sizing:border-box;"></div>
<span style="left:613.5px;top:248.48px;font-size:6.2px;line-height:7.44px;color:#aaa;transform:scaleX(0.9027);">Apply</span>
<span style="left:666.5px;top:248.48px;font-size:6.2px;line-height:7.44px;color:#aaa;transform:scaleX(0.9517);">Discard</span>
<span style="left:463.8px;top:265.72px;font-size:11.3px;line-height:13.56px;color:#5a5a5a;transform:scaleX(0.8498);">Selection</span>
<svg style="left:750.5px;top:271.5px" width="5" height="3.5" viewBox="0 0 5 3.5"><path d="M0 0.2H5L2.5 3.2Z" fill="#555"/></svg>
<div style="left:462px;top:281.5px;width:296.6px;height:91px;background:#fff;"></div>
<div style="left:462px;top:281.5px;width:296.6px;height:10.5px;background:#f7f7f7;"></div>
<div style="left:462px;top:292px;width:296.6px;height:0.6px;background:#e0e0e0;"></div>
<div style="left:553.3px;top:282px;width:0.6px;height:10px;background:#dedede;"></div>
<div style="left:618.7px;top:282px;width:0.6px;height:10px;background:#dedede;"></div>
<div style="left:685.8px;top:282px;width:0.6px;height:10px;background:#dedede;"></div>
<div style="left:720.7px;top:282px;width:0.6px;height:10px;background:#dedede;"></div>
<span style="left:464px;top:283.64px;font-size:6.1px;line-height:7.32px;color:#555;transform:scaleX(0.9294);">Title</span>
<span style="left:556px;top:283.64px;font-size:6.1px;line-height:7.32px;color:#555;transform:scaleX(0.8685);">Image Size</span>
<span style="left:621.5px;top:283.64px;font-size:6.1px;line-height:7.32px;color:#555;transform:scaleX(0.9447);">Position</span>
<span style="left:687.8px;top:283.64px;font-size:6.1px;line-height:7.32px;color:#555;transform:scaleX(0.9087);">Color Space</span>
<span style="left:723.1px;top:283.64px;font-size:6.1px;line-height:7.32px;color:#555;transform:scaleX(0.9985);">Input Profile</span>
<span style="left:464.6px;top:295.34px;font-size:6.1px;line-height:7.32px;color:#555;transform:scaleX(0.9867);">TestPrint_test.pdf</span>
<span style="left:557.3px;top:295.34px;font-size:6.1px;line-height:7.32px;color:#555;transform:scaleX(0.9232);">100.00 cm x 70.91 cm</span>
<span style="left:623.5px;top:295.34px;font-size:6.1px;line-height:7.32px;color:#555;transform:scaleX(0.9431);">1.50 cm x 1.50 cm</span>
<span style="left:688.6px;top:295.34px;font-size:6.1px;line-height:7.32px;color:#555;transform:scaleX(0.7865);">SEP</span>
<span style="left:724.7px;top:295.34px;font-size:6.1px;line-height:7.32px;color:#555;transform:scaleX(0.8905);">PS/PDF-CMS</span>
<div style="left:462px;top:362.5px;width:296px;height:8.6px;background:#f0f0f0;"></div>
<div style="left:462.3px;top:362.5px;width:8.4px;height:8.6px;background:#fff;"></div>
<div style="left:749.8px;top:362.5px;width:8.2px;height:8.6px;background:#fff;"></div>
<div style="left:628.4px;top:362.5px;width:121.4px;height:8.6px;background:#cdcdcd;"></div>
<div style="left:471px;top:362.5px;width:157.4px;height:8.6px;background:#fff;border:0.5px solid #e0e0e0;box-sizing:border-box;"></div>
<svg style="left:464.6px;top:365px" width="3" height="4.4" viewBox="0 0 3 4.4"><path d="M3 0V4.4L0 2.2Z" fill="#444"/></svg>
<svg style="left:752px;top:365px" width="3" height="4.4" viewBox="0 0 3 4.4"><path d="M0 0V4.4L3 2.2Z" fill="#444"/></svg>
<div style="left:460px;top:371.1px;width:298px;height:4.3px;background:#cacaca;"></div>
<span style="left:463.8px;top:377.02px;font-size:11.3px;line-height:13.56px;color:#5a5a5a;transform:scaleX(0.8991);">Waiting</span>
<svg style="left:731px;top:382.5px" width="5" height="3.5" viewBox="0 0 5 3.5"><path d="M0 0.2H5L2.5 3.2Z" fill="#555"/></svg>
<svg style="left:741px;top:380.8px" width="5" height="6" viewBox="0 0 5 6"><path d="M1.3 0.5H3.7V3H1.3ZM0.4 3.2H4.6M2.5 3.2V5.8" stroke="#666" stroke-width="0.7" fill="none"/></svg>
<svg style="left:750.5px;top:381.3px" width="5" height="5" viewBox="0 0 5 5"><path d="M0.6 0.6L4.4 4.4M4.4 0.6L0.6 4.4" stroke="#666" stroke-width="0.8"/></svg>
<div style="left:462px;top:392px;width:296px;height:75.5px;background:#fff;border-top:1.7px solid #8e8e8e;border-left:0.8px solid #999;box-sizing:border-box;"></div>
<div style="left:462.8px;top:393.8px;width:295px;height:11.2px;background:#f6f6f6;"></div>
<div style="left:462.8px;top:394.5px;width:152.7px;height:10.5px;background:#fcfcfc;"></div>
<div style="left:462px;top:405px;width:296px;height:0.6px;background:#e0e0e0;"></div>
<div style="left:523.2px;top:395px;width:0.7px;height:10px;background:#d6d6d6;"></div>
<div style="left:554.5px;top:395px;width:0.7px;height:10px;background:#d6d6d6;"></div>
<div style="left:615.5px;top:395px;width:0.7px;height:10px;background:#d6d6d6;"></div>
<span style="left:465.8px;top:396.34px;font-size:6.1px;line-height:7.32px;color:#555;transform:scaleX(1.0192);">Waiting</span>
<span style="left:526.4px;top:396.34px;font-size:6.1px;line-height:7.32px;color:#555;transform:scaleX(0.9217);">Copies</span>
<span style="left:557.3px;top:396.34px;font-size:6.1px;line-height:7.32px;color:#555;transform:scaleX(0.9253);">Status</span>
<span style="left:465.8px;top:406.94px;font-size:6.1px;line-height:7.32px;color:#555;transform:scaleX(1.0322);">[7]</span>
<span style="left:477px;top:406.94px;font-size:6.1px;line-height:7.32px;color:#555;transform:scaleX(0.9201);">TestPrint_test</span>
<span style="left:527.2px;top:406.94px;font-size:6.1px;line-height:7.32px;color:#555;transform:scaleX(1.0025);">0/1</span>
<span style="left:558px;top:406.94px;font-size:6.1px;line-height:7.32px;color:#555;transform:scaleX(0.9526);">Suspended</span>
<div style="left:462px;top:467.5px;width:296px;height:12px;background:#f0f0f0;"></div>
<div style="left:462.6px;top:467.5px;width:25.6px;height:11.5px;background:#fff;border:0.6px solid #c8c8c8;border-top:0;box-sizing:border-box;"></div>
<span style="left:465.8px;top:469.64px;font-size:6.1px;line-height:7.32px;color:#555;transform:scaleX(1.0043);">Waiting</span>
<span style="left:493px;top:469.64px;font-size:6.1px;line-height:7.32px;color:#555;transform:scaleX(0.9190);">Done</span>
<div style="left:1.3px;top:479.2px;width:757px;height:0.8px;background:#dcdcdc;"></div>
<div style="left:1.3px;top:480px;width:757px;height:10px;background:#f0f0f0;"></div>
<svg style="left:750px;top:482px" width="8" height="8" viewBox="0 0 8 8"><path d="M6.5 1.5h1M6.5 4h1M4 4h1M6.5 6.5h1M4 6.5h1M1.5 6.5h1" stroke="#bbb" stroke-width="1"/></svg>
<span style="left:3.6px;top:481.44px;font-size:6.6px;line-height:7.92px;color:#555;transform:scaleX(0.8230);">Ready</span>
<span style="left:529.2px;top:481.52px;font-size:6.3px;line-height:7.56px;color:#555;transform:scaleX(0.9808);">Mirrored</span>
<span style="left:677.7px;top:481.52px;font-size:6.3px;line-height:7.56px;color:#555;transform:scaleX(0.9159);">Normal Job</span>
</body></html>
